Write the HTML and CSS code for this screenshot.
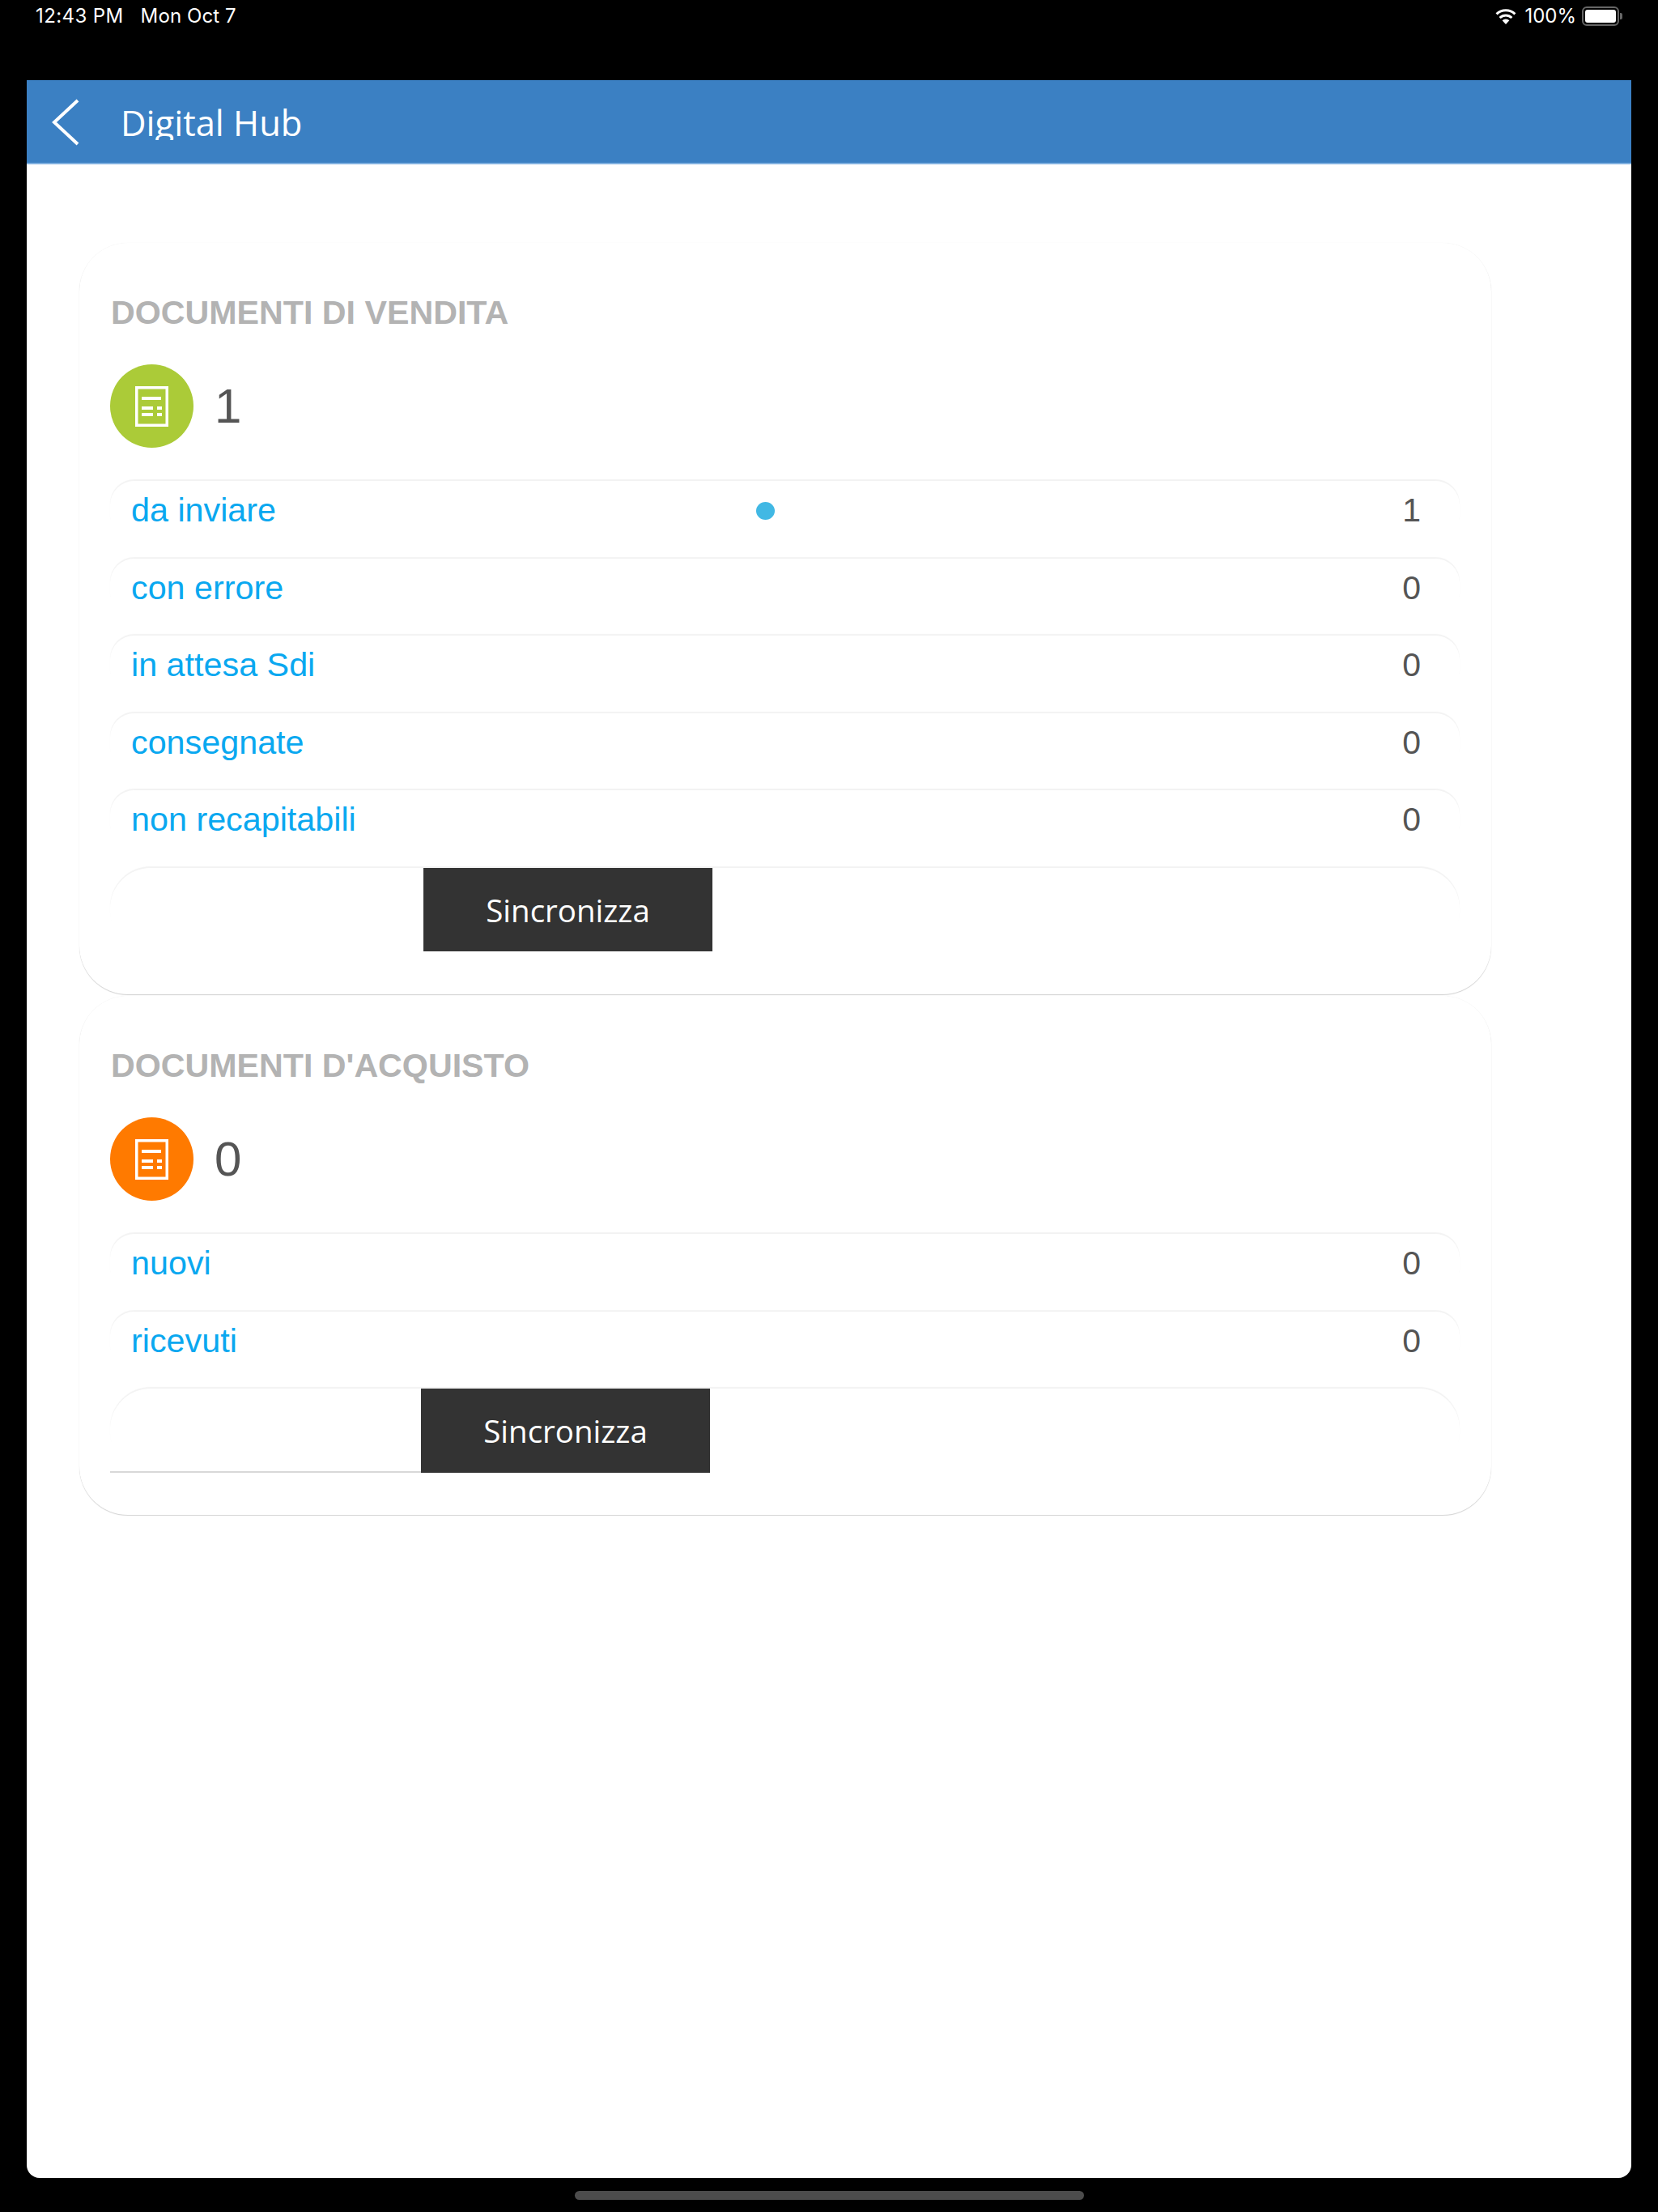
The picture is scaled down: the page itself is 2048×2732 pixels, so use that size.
FILE: index.html
```html
<!DOCTYPE html>
<html lang="it">
<head>
<meta charset="UTF-8">
<title>Digital Hub</title>
<link rel="stylesheet" href="styles.css">
</head>
<body>
<div class="status-bar">
	<span class="status-time">12:43 PM</span>
	<span class="status-date">Mon Oct 7</span>
	<svg class="wifi" width="26" height="20" viewBox="0 0 26 20">
		<path d="M13 20 L8.6 15.2 A6.4 6.4 0 0 1 17.4 15.2 Z" fill="#fff"/>
		<path d="M5.6 12 A10.6 10.6 0 0 1 20.4 12" fill="none" stroke="#fff" stroke-width="3"/>
		<path d="M1.6 7.4 A16.4 16.4 0 0 1 24.4 7.4" fill="none" stroke="#fff" stroke-width="3"/>
	</svg>
	<span class="status-battery">100%</span>
	<div class="battery"><div class="battery-fill"></div></div>
	<div class="battery-nub"></div>
</div>

<div class="app">
	<div class="header">
		<svg class="back" width="36" height="58" viewBox="0 0 36 58">
			<path d="M33 2 L4 29 L33 56" fill="none" stroke="#fff" stroke-width="4"/>
		</svg>
		<div class="title">Digital Hub</div>
	</div>

	<div class="content">
		<div class="card">
			<h2 class="card-title">DOCUMENTI DI VENDITA</h2>
			<div class="summary">
				<div class="circle circle-green">
					<svg width="41" height="50" viewBox="0 0 41 50">
						<rect x="1.75" y="1.75" width="37.5" height="46.5" fill="none" stroke="#fff" stroke-width="3.5"/>
						<path d="M8 15 H32 M8 27 H22 M27 27 H33 M8 35 H22 M27 35 H33" stroke="#fff" stroke-width="4" fill="none"/>
					</svg>
				</div>
				<span class="summary-count">1</span>
			</div>
			<div class="row"><span class="row-label">da inviare</span><span class="dot"></span><span class="row-count">1</span></div>
			<div class="row"><span class="row-label">con errore</span><span class="row-count">0</span></div>
			<div class="row"><span class="row-label">in attesa Sdi</span><span class="row-count">0</span></div>
			<div class="row"><span class="row-label">consegnate</span><span class="row-count">0</span></div>
			<div class="row"><span class="row-label">non recapitabili</span><span class="row-count">0</span></div>
			<div class="sync-row">
				<div class="sync-spacer"></div>
				<button class="sync-button">Sincronizza</button>
			</div>
		</div>

		<div class="card">
			<h2 class="card-title">DOCUMENTI D'ACQUISTO</h2>
			<div class="summary">
				<div class="circle circle-orange">
					<svg width="41" height="50" viewBox="0 0 41 50">
						<rect x="1.75" y="1.75" width="37.5" height="46.5" fill="none" stroke="#fff" stroke-width="3.5"/>
						<path d="M8 15 H32 M8 27 H22 M27 27 H33 M8 35 H22 M27 35 H33" stroke="#fff" stroke-width="4" fill="none"/>
					</svg>
				</div>
				<span class="summary-count">0</span>
			</div>
			<div class="row"><span class="row-label">nuovi</span><span class="row-count">0</span></div>
			<div class="row"><span class="row-label">ricevuti</span><span class="row-count">0</span></div>
			<div class="sync-row">
				<div class="sync-spacer sync-spacer-line"></div>
				<button class="sync-button">Sincronizza</button>
			</div>
		</div>
	</div>
</div>

<div class="home-area"><div class="home-bar"></div></div>
</body>
</html>
```
FILE: styles.css
```css
body{
	margin: 0;
	width: 2048px;
	height: 2732px;
	overflow: hidden;
	background-color: #000;
	font-family: "Liberation Sans", Arial, sans-serif;
}
.status-bar{
	height: 99px;
	box-sizing: border-box;
	padding: 8px 44px 0 44px;
	display: flex;
	align-items: flex-start;
	color: #fff;
	font-family: Inter, "Liberation Sans", sans-serif;
	font-size: 24px;
	line-height: 24px;
}
.status-time{
	letter-spacing: 0.4px;
}
.status-date{
	margin-left: 21px;
	letter-spacing: 0.1px;
}
.wifi{
	margin-left: auto;
	margin-top: 2px;
}
.status-battery{
	margin-left: 10px;
}
.battery{
	margin-left: 7px;
	width: 46px;
	height: 24px;
	box-sizing: border-box;
	border: 2px solid #666;
	border-radius: 6px;
	padding: 2px;
}
.battery-fill{
	height: 100%;
	background-color: #fff;
	border-radius: 3px;
}
.battery-nub{
	width: 3px;
	height: 8px;
	margin: 8px 0 0 1px;
	background-color: #666;
	border-radius: 0 2px 2px 0;
}
.app{
	margin: 0 33px;
	height: 2591px;
	background-color: #fff;
	border-radius: 0 0 16px 16px;
	overflow: hidden;
}
.header{
	height: 102px;
	background-color: #3b80c3;
	border-bottom: 2px solid #7fb0e0;
	display: flex;
	align-items: center;
}
.back{
	margin-left: 30px;
	margin-top: 2px;
	flex: none;
}
/* the descender of the g is cut off in the bar */
.title{
	align-self: flex-start;
	margin: 25px 0 0 50px;
	height: 49px;
	overflow: hidden;
	color: #fff;
	font-family: "Open Sans", sans-serif;
	font-weight: 400;
	font-size: 43.5px;
	line-height: 56px;
}
.content{
	padding: 97px 0 0 65px;
	width: 1744px;
}
.card{
	height: 928px;
	box-sizing: border-box;
	margin-bottom: 2px;
	padding: 63px 39px 0 38px;
	border-radius: 60px;
	box-shadow: 0 1px 1px rgba(0, 0, 0, 0.17), 0 0 1px rgba(0, 0, 0, 0.08);
}
.card + .card{
	height: 641px;
}
.card-title{
	margin: 0 0 41px 1px;
	color: #b3b3b3;
	font-size: 41.2px;
	font-weight: bold;
	line-height: 46px;
}
.summary{
	display: flex;
	align-items: center;
	height: 103px;
	margin-bottom: 41px;
}
.circle{
	width: 103px;
	height: 103px;
	border-radius: 50%;
	display: flex;
	align-items: center;
	justify-content: center;
}
.circle-green{
	background-color: #abcb38;
}
.circle-orange{
	background-color: #ff7a00;
}
.summary-count{
	margin-left: 26px;
	color: #555;
	font-size: 60px;
}
.row{
	height: 73px;
	margin-bottom: 22.6px;
	box-sizing: border-box;
	padding: 0 48px 0 26px;
	display: flex;
	align-items: center;
	border-radius: 30px;
	box-shadow: 0 -2px 1px rgba(0, 0, 0, 0.05);
}
.row-label{
	width: 772px;
	flex: none;
	color: #0aa8f0;
	font-size: 41.3px;
}
.row-count{
	margin-left: auto;
	color: #555;
	font-size: 41px;
}
.dot{
	width: 23px;
	height: 22px;
	border-radius: 50%;
	background-color: #41b8e4;
}
.sync-row{
	height: 103.5px;
	display: flex;
	border-radius: 50px;
	box-shadow: 0 -2px 1px rgba(0, 0, 0, 0.05);
}
.sync-spacer{
	width: 387px;
	flex: none;
}
.sync-spacer-line{
	width: 384px;
	box-sizing: border-box;
	border-bottom: 2px solid #d8d8d8;
}
.sync-button{
	width: 357px;
	height: 103.5px;
	padding: 0;
	border: 0;
	background-color: #333;
	color: #fff;
	font-family: "Open Sans", sans-serif;
	font-size: 38.5px;
}
.home-area{
	display: flex;
	justify-content: center;
	padding-top: 16px;
}
.home-bar{
	width: 629px;
	height: 11px;
	border-radius: 6px;
	background-color: #4c4c4c;
}
```
